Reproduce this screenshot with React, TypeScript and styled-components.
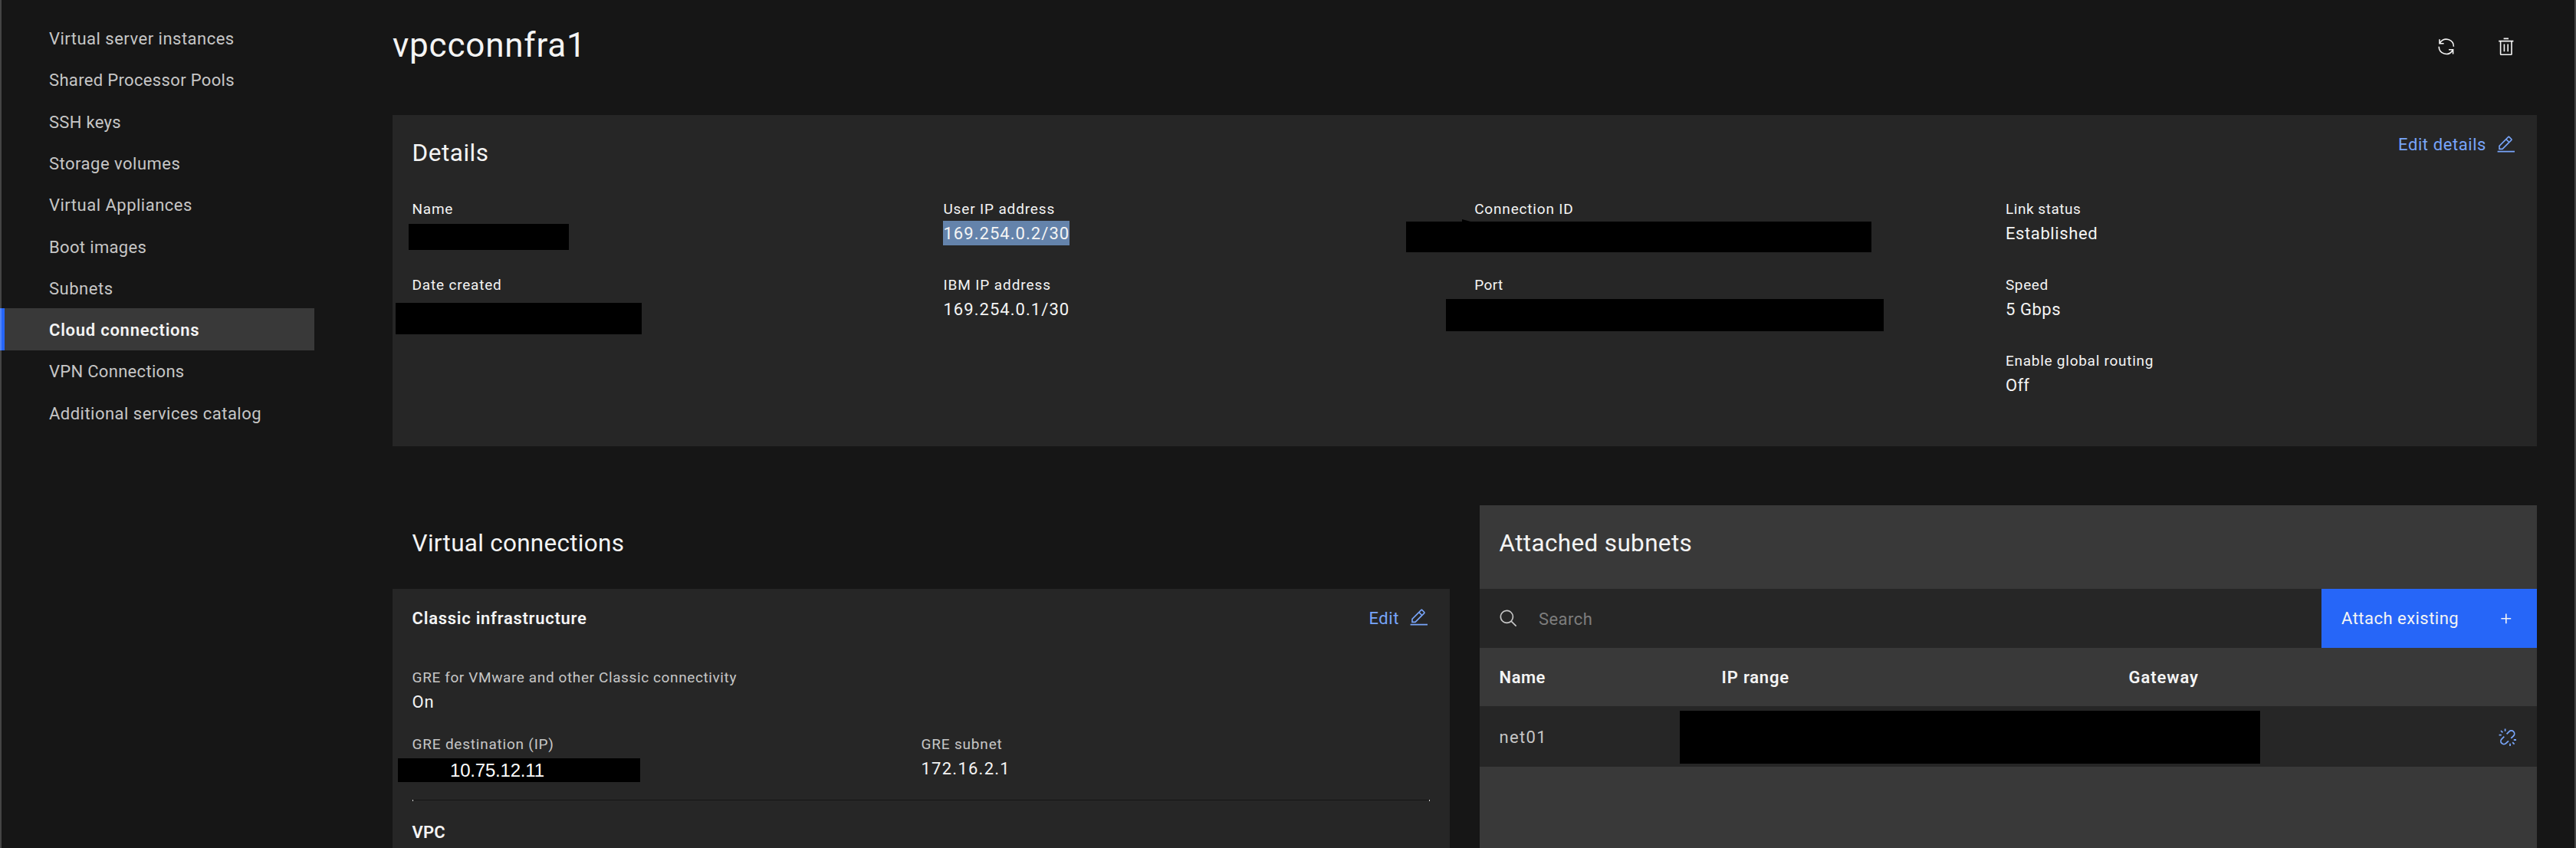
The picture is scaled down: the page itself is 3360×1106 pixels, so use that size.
import React from 'react';
import styled, { createGlobalStyle, css } from 'styled-components';

const color = {
  page: '#161616',
  layer: '#262626',
  accent: '#393939',
  text: '#f4f4f4',
  muted: '#c6c6c6',
  placeholder: '#7d7d7d',
  link: '#78a5fa',
  primary: '#2666f8',
  selection: '#6483ab',
};

const GlobalStyle = createGlobalStyle`
  *, *::before, *::after { box-sizing: border-box; }
  body {
    margin: 0;
    background: ${color.page};
    color: ${color.text};
    font-family: Roboto, "Noto Sans", sans-serif;
    font-size: 22px;
  }
`;

type Tracked = { $track?: number };
const tracking = css<Tracked>`
  letter-spacing: ${({ $track = 0.5 }) => $track}px;
  white-space: nowrap;
`;

const Shell = styled.div`
  position: relative;
  display: flex;
  width: 3360px;
  height: 1106px;
  overflow: hidden;

  &::after {
    content: '';
    position: absolute;
    inset: 0;
    border: solid rgba(255, 255, 255, 0.2);
    border-width: 0 2px;
    pointer-events: none;
  }
`;

/* Side navigation */
const Sidebar = styled.nav`
  flex: 0 0 410px;
  padding-top: 22.4px;
`;

const NavItem = styled.a<Tracked & { $active?: boolean }>`
  display: flex;
  align-items: center;
  height: 54.3px;
  padding: 2px 0 0 64px;
  color: ${color.muted};
  ${tracking}
  ${({ $active }) =>
    $active &&
    css`
      height: 55px;
      margin-bottom: -0.7px;
      padding-left: 58px;
      border-left: 6px solid ${color.primary};
      background: ${color.accent};
      color: ${color.text};
      font-weight: 600;
    `}
`;

/* Page */
const Main = styled.main`
  flex: 1;
  display: flex;
  flex-direction: column;
  padding: 0 51px 0 102px;
`;

const PageHeader = styled.header`
  display: flex;
  justify-content: space-between;
  height: 150px;
`;

const PageTitle = styled.h1`
  margin: 31px 0 0;
  font-size: 44px;
  font-weight: 400;
  line-height: 56px;
  letter-spacing: 0.8px;
`;

const PageActions = styled.div`
  display: flex;
  align-items: flex-start;
  gap: 53.2px;
  padding: 48px 27px 0 0;
`;

const SectionTitle = styled.h2<Tracked>`
  margin: 0;
  padding-top: 30px;
  font-size: 31.5px;
  font-weight: 400;
  line-height: 40px;
  ${tracking}
`;

const Glyph = styled.svg`
  display: block;
  flex: none;
  width: 25.6px;
  height: 25.6px;
  fill: currentColor;
`;

const TextLink = styled.a<Tracked>`
  display: flex;
  align-items: center;
  gap: 13.4px;
  line-height: 27px;
  color: ${color.link};
  ${tracking}
`;

/* Details */
const DetailsPanel = styled.section`
  height: 432px;
  padding-left: 25.6px;
  background: ${color.layer};
`;

const DetailsHeader = styled.div`
  display: flex;
  align-items: flex-start;
  justify-content: space-between;
  height: 107.4px;
  padding-right: 27px;

  ${TextLink} { margin-top: 25px; }
`;

const DetailsGrid = styled.div`
  display: grid;
  grid-template-columns: repeat(4, 692.8px);
`;

const FieldStack = styled.div<{ $gap: number }>`
  display: flex;
  flex-direction: column;
  gap: ${({ $gap }) => $gap}px;
`;

const Field = styled.div`
  position: relative;
  height: 63px;
`;

const FieldLabel = styled.div<Tracked & { $muted?: boolean }>`
  font-size: 19px;
  line-height: 31px;
  color: ${({ $muted }) => ($muted ? color.muted : color.text)};
  ${tracking}
`;

const FieldValue = styled.div<Tracked & { $selected?: boolean }>`
  width: fit-content;
  height: 32px;
  line-height: 34px;
  background: ${({ $selected }) => ($selected ? color.selection : 'transparent')};
  ${tracking}
`;

const Redaction = styled.div<{ $x: number; $y: number; $w: number; $h: number }>`
  position: absolute;
  left: ${({ $x }) => $x}px;
  top: ${({ $y }) => $y}px;
  width: ${({ $w }) => $w}px;
  height: ${({ $h }) => $h}px;
  background: #000;
`;

const Nib = styled.i`
  position: absolute;
  left: 73px;
  top: -3px;
  width: 15px;
  height: 4px;
  background: #000;
  clip-path: polygon(0 0, 100% 100%, 0 100%);
`;

const ReplacedValue = styled.span`
  display: block;
  padding: 0 0 0 68px;
  font-family: "Liberation Sans", Arial, sans-serif;
  font-size: 24px;
  line-height: 31px;
  letter-spacing: -0.2px;
  color: #fff;
`;

/* Lower panels */
const Panels = styled.div`
  display: grid;
  grid-template-columns: 1fr 1fr;
  gap: 39px;
  height: 447px;
  margin-top: 77px;
`;

const Panel = styled.section<{ $filled?: boolean }>`
  display: flex;
  flex-direction: column;
  background: ${({ $filled }) => ($filled ? color.accent : 'transparent')};
`;

const PanelHeader = styled.div`
  height: 109px;
  padding-left: 25.6px;
`;

const ConnectionCard = styled.div`
  flex: 1;
  padding: 22px 25.6px 0;
  background: ${color.layer};
`;

const CardHeader = styled.div`
  display: flex;
  align-items: center;
  justify-content: space-between;
  height: 32px;
  margin: 0 1.4px 46px 0;
`;

const CardTitle = styled.h3<Tracked>`
  margin: 0;
  font-size: 22px;
  font-weight: 600;
  line-height: 33px;
  ${tracking}
`;

const FieldPair = styled.div`
  display: grid;
  grid-template-columns: 1fr 1fr;
`;

const Divider = styled.div`
  display: flex;
  justify-content: space-between;
  height: 2px;
  margin: 25px 0 24px;
  border-top: 1px solid ${color.page};

  &::before,
  &::after {
    content: '';
    width: 1px;
    height: 2px;
    margin-top: -1px;
    background: #d0d0d0;
  }
`;

const Toolbar = styled.div`
  display: flex;
  height: 77px;
  background: ${color.layer};
`;

const SearchField = styled.div`
  flex: 1;
  display: flex;
  align-items: center;
  gap: 26px;
  padding-left: 25.3px;
  color: ${color.muted};
`;

const Placeholder = styled.span`
  padding-top: 2px;
  color: ${color.placeholder};
  letter-spacing: 0.5px;
`;

const AttachButton = styled.button`
  display: flex;
  align-items: center;
  justify-content: space-between;
  width: 281px;
  padding: 0 27px 0 26px;
  border: 0;
  background: ${color.primary};
  color: ${color.text};
  font: inherit;
  letter-spacing: 0.48px;
`;

const TableRow = styled.div<{ $head?: boolean }>`
  position: relative;
  display: grid;
  grid-template-columns: 290px 531px 1fr auto;
  align-items: center;
  height: ${({ $head }) => ($head ? 76 : 79)}px;
  padding: ${({ $head }) => ($head ? 0 : 2)}px 25.6px 0;
  background: ${({ $head }) => ($head ? color.accent : color.layer)};
  color: ${({ $head }) => ($head ? color.text : color.muted)};
  font-weight: ${({ $head }) => ($head ? 600 : 400)};
`;

const Cell = styled.span<Tracked>`
  ${tracking}
`;

const Detach = styled.span`
  color: ${color.link};
`;

const RenewIcon = () => (
  <Glyph viewBox="0 0 32 32">
    <path d="M12 10H6.78A11 11 0 0127 16h2A13 13 0 006 7.68V4H4v8h8zM20 22h5.22A11 11 0 015 16H3a13 13 0 0023 8.32V28h2V20H20z" />
  </Glyph>
);

const TrashIcon = () => (
  <Glyph viewBox="0 0 32 32">
    <path d="M12 12h2v12h-2zM18 12h2v12h-2z" />
    <path d="M4 6v2h2v20a2 2 0 002 2h16a2 2 0 002-2V8h2V6zm4 22V8h16v20zM12 2h8v2h-8z" />
  </Glyph>
);

const EditIcon = () => (
  <Glyph viewBox="0 0 32 32">
    <path d="M2 26h28v2H2zM25.4 9c.8-.8.8-2 0-2.8l-3.6-3.6c-.8-.8-2-.8-2.8 0l-15 15V24h6.4l15-15zm-5-5L24 7.6l-3 3L17.4 7l3-3zM6 22v-3.6l10-10 3.6 3.6-10 10H6z" />
  </Glyph>
);

const SearchIcon = () => (
  <Glyph viewBox="0 0 32 32">
    <path d="M29 27.586l-7.552-7.552a11.018 11.018 0 10-1.414 1.414L27.586 29zM4 13a9 9 0 119 9 9.01 9.01 0 01-9-9z" />
  </Glyph>
);

const AddIcon = () => (
  <Glyph viewBox="0 0 32 32">
    <path d="M17 15V8h-2v7H8v2h7v7h2v-7h7v-2z" />
  </Glyph>
);

const UnlinkIcon = () => (
  <Glyph viewBox="0 0 32 32">
    <g fill="none" stroke="currentColor" strokeWidth="2.2">
      <path d="M14.5 10.4l4-4a5 5 0 017.1 7.1l-4 4" />
      <path d="M17.5 21.6l-4 4a5 5 0 01-7.1-7.1l4-4" />
      <path d="M12 2v4M2 12h4M5 5l3 3M20 26v4M26 20h4M24 24l3 3" />
    </g>
  </Glyph>
);

const navItems: { label: string; track: number; active?: boolean }[] = [
  { label: 'Virtual server instances', track: 0.49 },
  { label: 'Shared Processor Pools', track: 0.34 },
  { label: 'SSH keys', track: 0.31 },
  { label: 'Storage volumes', track: 0.5 },
  { label: 'Virtual Appliances', track: 0.5 },
  { label: 'Boot images', track: 0.35 },
  { label: 'Subnets', track: 0.52 },
  { label: 'Cloud connections', track: 0.75, active: true },
  { label: 'VPN Connections', track: 0.3 },
  { label: 'Additional services catalog', track: 0.48 },
];

export default function App() {
  return (
    <>
      <GlobalStyle />
      <Shell>
        <Sidebar>
          {navItems.map(({ label, track, active }) => (
            <NavItem key={label} $track={track} $active={active}>
              {label}
            </NavItem>
          ))}
        </Sidebar>

        <Main>
          <PageHeader>
            <PageTitle>vpcconnfra1</PageTitle>
            <PageActions>
              <RenewIcon />
              <TrashIcon />
            </PageActions>
          </PageHeader>

          <DetailsPanel>
            <DetailsHeader>
              <SectionTitle $track={0.5}>Details</SectionTitle>
              <TextLink $track={0.58}>
                Edit details
                <EditIcon />
              </TextLink>
            </DetailsHeader>
            <DetailsGrid>
              <FieldStack $gap={36}>
                <Field>
                  <FieldLabel $track={0.7}>Name</FieldLabel>
                  <Redaction $x={-4.6} $y={34.6} $w={209} $h={34} />
                </Field>
                <Field>
                  <FieldLabel $track={0.8}>Date created</FieldLabel>
                  <Redaction $x={-21.6} $y={38.6} $w={321} $h={41} />
                </Field>
              </FieldStack>
              <FieldStack $gap={36}>
                <Field>
                  <FieldLabel $track={0.85}>User IP address</FieldLabel>
                  <FieldValue $track={1.05} $selected>169.254.0.2/30</FieldValue>
                </Field>
                <Field>
                  <FieldLabel $track={0.9}>IBM IP address</FieldLabel>
                  <FieldValue $track={1.05}>169.254.0.1/30</FieldValue>
                </Field>
              </FieldStack>
              <FieldStack $gap={36}>
                <Field>
                  <FieldLabel $track={0.82}>Connection ID</FieldLabel>
                  <Redaction $x={-89.2} $y={31.6} $w={607} $h={40}>
                    <Nib />
                  </Redaction>
                </Field>
                <Field>
                  <FieldLabel $track={0.4}>Port</FieldLabel>
                  <Redaction $x={-37.2} $y={33.6} $w={571} $h={42} />
                </Field>
              </FieldStack>
              <FieldStack $gap={36}>
                <Field>
                  <FieldLabel $track={0.54}>Link status</FieldLabel>
                  <FieldValue $track={0.6}>Established</FieldValue>
                </Field>
                <Field>
                  <FieldLabel $track={0.6}>Speed</FieldLabel>
                  <FieldValue $track={0.54}>5 Gbps</FieldValue>
                </Field>
                <Field>
                  <FieldLabel $track={0.74}>Enable global routing</FieldLabel>
                  <FieldValue $track={0.3}>Off</FieldValue>
                </Field>
              </FieldStack>
            </DetailsGrid>
          </DetailsPanel>

          <Panels>
            <Panel>
              <PanelHeader>
                <SectionTitle $track={0.27}>Virtual connections</SectionTitle>
              </PanelHeader>
              <ConnectionCard>
                <CardHeader>
                  <CardTitle $track={0.73}>Classic infrastructure</CardTitle>
                  <TextLink $track={0.6}>
                    Edit
                    <EditIcon />
                  </TextLink>
                </CardHeader>
                <FieldStack $gap={24}>
                  <Field>
                    <FieldLabel $muted $track={0.61}>
                      GRE for VMware and other Classic connectivity
                    </FieldLabel>
                    <FieldValue $track={0.8}>On</FieldValue>
                  </Field>
                  <FieldPair>
                    <Field>
                      <FieldLabel $muted $track={0.78}>GRE destination (IP)</FieldLabel>
                      <Redaction $x={-18.6} $y={34} $w={316} $h={31}>
                        <ReplacedValue>10.75.12.11</ReplacedValue>
                      </Redaction>
                    </Field>
                    <Field>
                      <FieldLabel $muted $track={0.82}>GRE subnet</FieldLabel>
                      <FieldValue $track={1.25}>172.16.2.1</FieldValue>
                    </Field>
                  </FieldPair>
                </FieldStack>
                <Divider />
                <CardTitle $track={0.1}>VPC</CardTitle>
              </ConnectionCard>
            </Panel>

            <Panel $filled>
              <PanelHeader>
                <SectionTitle $track={0.34}>Attached subnets</SectionTitle>
              </PanelHeader>
              <Toolbar>
                <SearchField>
                  <SearchIcon />
                  <Placeholder>Search</Placeholder>
                </SearchField>
                <AttachButton>
                  Attach existing
                  <AddIcon />
                </AttachButton>
              </Toolbar>
              <TableRow $head>
                <Cell $track={0.5}>Name</Cell>
                <Cell $track={0.8}>IP range</Cell>
                <Cell $track={0.9}>Gateway</Cell>
              </TableRow>
              <TableRow>
                <Cell $track={1.3}>net01</Cell>
                <span />
                <span />
                <Detach>
                  <UnlinkIcon />
                </Detach>
                <Redaction $x={261} $y={6} $w={757} $h={69} />
              </TableRow>
            </Panel>
          </Panels>
        </Main>
      </Shell>
    </>
  );
}
